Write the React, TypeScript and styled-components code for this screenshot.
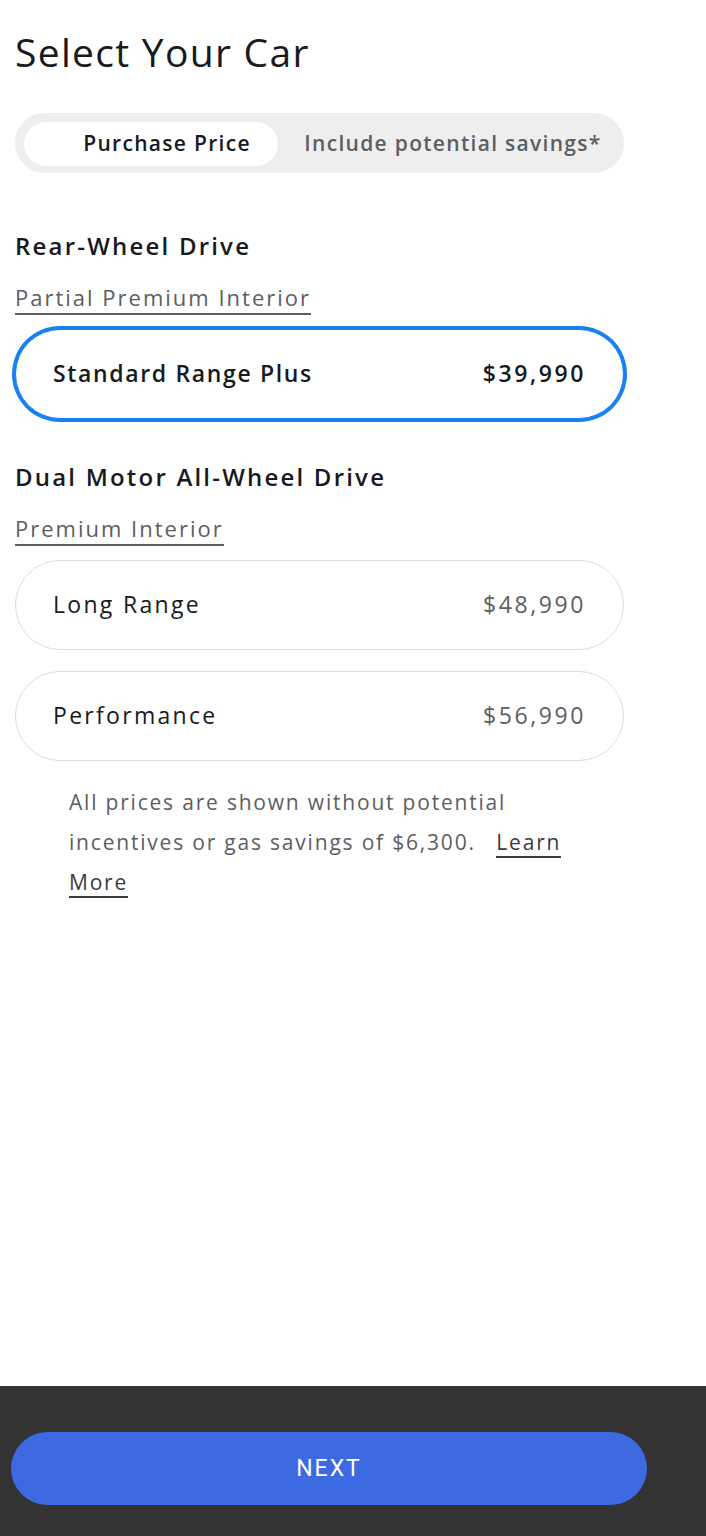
import React, { useState } from "react";
import styled, { createGlobalStyle } from "styled-components";

const GlobalStyle = createGlobalStyle`
  html, body {
    margin: 0;
    padding: 0;
    background: #ffffff;
  }
  body {
    font-family: "Open Sans", "Noto Sans", "Liberation Sans", sans-serif;
    color: #171a20;
  }
  * { box-sizing: border-box; }
`;

const Page = styled.div`
  min-height: 100vh;
  display: flex;
  flex-direction: column;
`;

const Main = styled.main`
  flex: 1;
  padding: 27px 0 0 15px;
  width: 624px;
`;

const Title = styled.h1`
  margin: 0;
  font-size: 39px;
  font-weight: 400;
  line-height: 50px;
  letter-spacing: 1.3px;
  color: #171a20;
`;

const Toggle = styled.div`
  margin-top: 36px;
  height: 60px;
  border-radius: 30px;
  background: #eeeeee;
  padding: 9px 9px 7px;
  display: flex;
  align-items: stretch;
`;

const ToggleOption = styled.button<{ $active?: boolean; $shift: number }>`
  border: none;
  border-radius: 22px;
  font-family: inherit;
  font-size: 21px;
  font-weight: 600;
  letter-spacing: 1.3px;
  display: flex;
  align-items: center;
  justify-content: center;
  padding: 0 0 3px ${(p) => p.$shift}px;
  cursor: pointer;
  background: ${(p) => (p.$active ? "#ffffff" : "transparent")};
  color: ${(p) => (p.$active ? "#171a20" : "#5c5e62")};
  ${(p) => (p.$active ? "width: 254px;" : "flex: 1;")}
`;

const Section = styled.section<{ $gap: number }>`
  margin-top: ${(p) => p.$gap}px;
`;

const SectionTitle = styled.h2`
  margin: 0;
  font-size: 24px;
  font-weight: 600;
  line-height: 30px;
  letter-spacing: 2.2px;
  color: #171a20;
`;

const Subtitle = styled.a`
  display: inline-block;
  margin-top: 23px;
  padding-bottom: 3px;
  font-size: 22px;
  line-height: 26px;
  color: #5c5e62;
  text-decoration: none;
  border-bottom: 2px solid #5c5e62;
  letter-spacing: 2px;
`;

const CardList = styled.div`
  margin-top: 14px;
  display: flex;
  flex-direction: column;
  gap: 21px;
`;

const Card = styled.button<{ $selected?: boolean }>`
  height: 90px;
  width: 609px;
  border-radius: 45px;
  background: #ffffff;
  font-family: inherit;
  border: 1px solid ${(p) => (p.$selected ? "#1a7ff0" : "#dcdcdc")};
  box-shadow: ${(p) => (p.$selected ? "0 0 0 3px #1a7ff0" : "none")};
  display: flex;
  align-items: center;
  justify-content: space-between;
  padding: 0 37px 2px 37px;
  cursor: pointer;
  font-size: 23px;
`;

const CardName = styled.span<{ $selected?: boolean }>`
  color: #171a20;
  font-weight: ${(p) => (p.$selected ? 600 : 400)};
  letter-spacing: ${(p) => (p.$selected ? "1.65px" : "2.3px")};
`;

const CardPrice = styled.span<{ $selected?: boolean }>`
  color: ${(p) => (p.$selected ? "#171a20" : "#5c5e62")};
  font-weight: ${(p) => (p.$selected ? 600 : 400)};
  letter-spacing: 2.6px;
`;

const Footnote = styled.p`
  margin: 21px 0 0;
  padding: 0 40px 0 54px;
  font-size: 21px;
  line-height: 40px;
  color: #5c5e62;
  letter-spacing: 1.8px;
`;

const LearnMore = styled.a`
  margin-left: 6px;
  color: #393c41;
  text-decoration: none;
  border-bottom: 2px solid #393c41;
`;

const Footer = styled.footer`
  background: #333333;
  height: 150px;
  padding: 46px 0 0 11px;
`;

const NextButton = styled.button`
  width: 636px;
  height: 73px;
  border: none;
  border-radius: 37px;
  background: #3e6ae1;
  color: #ffffff;
  font-family: "Roboto", "Liberation Sans", sans-serif;
  font-size: 23px;
  font-weight: 400;
  letter-spacing: 2px;
  cursor: pointer;
`;

type Trim = { name: string; price: string };

const groups: { title: string; interior: string; trims: Trim[]; gap: number }[] = [
  {
    title: "Rear-Wheel Drive",
    interior: "Partial Premium Interior",
    trims: [{ name: "Standard Range Plus", price: "$39,990" }],
    gap: 58,
  },
  {
    title: "Dual Motor All-Wheel Drive",
    interior: "Premium Interior",
    trims: [
      { name: "Long Range", price: "$48,990" },
      { name: "Performance", price: "$56,990" },
    ],
    gap: 43,
  },
];

export default function App() {
  const [mode, setMode] = useState(0);
  const [selected, setSelected] = useState("Standard Range Plus");
  return (
    <Page>
      <GlobalStyle />
      <Main>
        <Title>Select Your Car</Title>
        <Toggle>
          <ToggleOption $active={mode === 0} $shift={32} onClick={() => setMode(0)}>
            Purchase Price
          </ToggleOption>
          <ToggleOption $active={mode === 1} $shift={13} onClick={() => setMode(1)}>
            Include potential savings*
          </ToggleOption>
        </Toggle>
        {groups.map((g) => (
          <Section key={g.title} $gap={g.gap}>
            <SectionTitle>{g.title}</SectionTitle>
            <Subtitle>{g.interior}</Subtitle>
            <CardList>
              {g.trims.map((t) => {
                const sel = t.name === selected;
                return (
                  <Card key={t.name} $selected={sel} onClick={() => setSelected(t.name)}>
                    <CardName $selected={sel}>{t.name}</CardName>
                    <CardPrice $selected={sel}>{t.price}</CardPrice>
                  </Card>
                );
              })}
            </CardList>
          </Section>
        ))}
        <Footnote>
          All prices are shown without potential incentives or gas savings of $6,300.{"\u00a0\u00a0"}
          <LearnMore>Learn More</LearnMore>
        </Footnote>
      </Main>
      <Footer>
        <NextButton>NEXT</NextButton>
      </Footer>
    </Page>
  );
}
